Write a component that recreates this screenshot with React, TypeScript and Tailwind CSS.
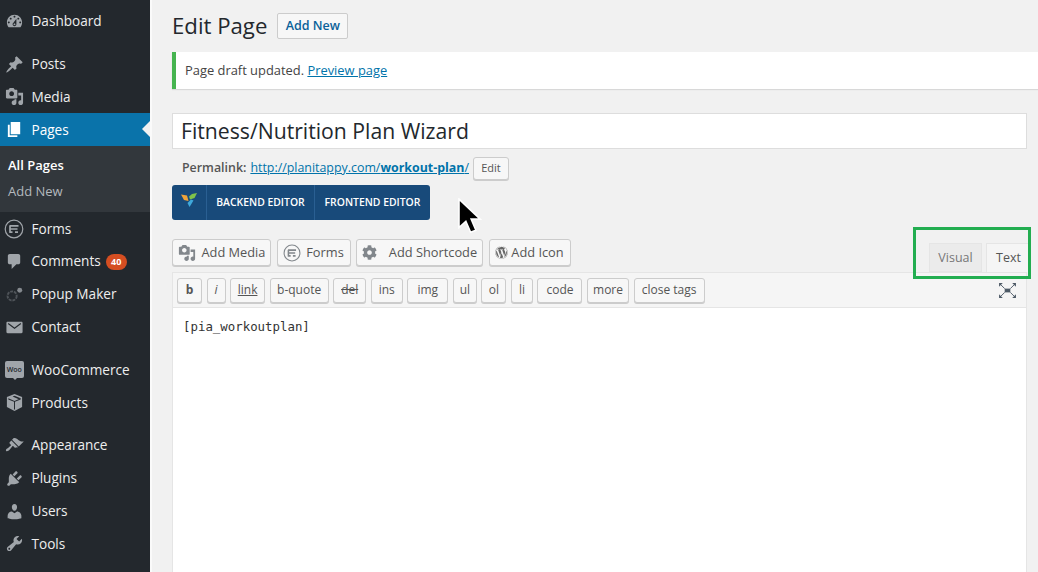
import React from "react";
import { FaWordpress, FaCog } from "react-icons/fa";

const iconPaths: Record<string, string> = {
  dashboard:
    "M3.76 16h12.48c1.1-1.37 1.76-3.11 1.76-5 0-4.42-3.58-8-8-8s-8 3.58-8 8c0 1.89.66 3.63 1.76 5zM10 4c.55 0 1 .45 1 1s-.45 1-1 1-1-.45-1-1 .45-1 1-1zM6 6c.55 0 1 .45 1 1s-.45 1-1 1-1-.45-1-1 .45-1 1-1zm8 0c.55 0 1 .45 1 1s-.45 1-1 1-1-.45-1-1 .45-1 1-1zm-5.37 5.55L12 7v6c0 1.1-.9 2-2 2s-2-.9-2-2c0-.57.24-1.08.63-1.45zM4 10c.55 0 1 .45 1 1s-.45 1-1 1-1-.45-1-1 .45-1 1-1zm12 0c.55 0 1 .45 1 1s-.45 1-1 1-1-.45-1-1 .45-1 1-1zm-5 3c0-.55-.45-1-1-1s-1 .45-1 1 .45 1 1 1 1-.45 1-1z",
  posts:
    "M10.44 3.02l1.82-1.82 6.36 6.35-1.83 1.82c-1.05-.68-2.48-.57-3.41.36l-.75.75c-.92.93-1.04 2.35-.35 3.41l-1.83 1.82-2.41-2.41-2.8 2.79c-.42.42-3.38 2.71-3.8 2.29s1.86-3.39 2.28-3.81l2.79-2.79L4.1 9.36l1.83-1.82c1.05.69 2.48.57 3.4-.36l.75-.75c.93-.92 1.05-2.35.36-3.41z",
  media:
    "M13 11V4c0-.55-.45-1-1-1h-1.67L9 1H5L3.67 3H2c-.55 0-1 .45-1 1v7c0 .55.45 1 1 1h10c.55 0 1-.45 1-1zM7 4.5c1.38 0 2.5 1.12 2.5 2.5S8.38 9.5 7 9.5 4.5 8.38 4.5 7 5.62 4.5 7 4.5zM14 6h5v10.5c0 1.38-1.12 2.5-2.5 2.5S14 17.88 14 16.5s1.12-2.5 2.5-2.5c.17 0 .34.02.5.05V9h-3V6zm-4 8.05V13h2v3.5c0 1.38-1.12 2.5-2.5 2.5S7 17.88 7 16.5 8.12 14 9.5 14c.17 0 .34.02.5.05z",
  pages: "M6 15V2h10v13H6zm-1 1h8v2H3V5h2v11z",
  comments:
    "M5 2h9c1.1 0 2 .9 2 2v7c0 1.1-.9 2-2 2h-2l-5 5v-5H5c-1.1 0-2-.9-2-2V4c0-1.1.9-2 2-2z",
  contact:
    "M1.500 5.200C1.500 4.500 2 4 2.700 4h14.600c.7 0 1.200.5 1.200 1.200v9.600c0 .7-.5 1.200-1.200 1.200H2.700c-.7 0-1.200-.5-1.200-1.200zM3 6.200l7 5.300 7-5.300-.7-.9-6.300 4.700-6.300-4.700z",
  products:
    "M10 1l8 3.200v10.600L10 19l-8-4.200V4.200zM10 2.800L8 3.700l6.500 2.800 2-.9zM3.500 5.600v1.200l6 2.500v8l1 0v-8l6-2.500V5.600L10 8.300z",
  appearance:
    "M14.48 11.06L7.41 3.99l1.5-1.5c.5-.56 2.3-.47 3.51.32 1.21.8 1.43 1.28 2.91 2.1 1.18.64 2.45 1.26 4.45.85zm-.71.71L6.7 4.7 4.93 6.47c-.39.39-.39 1.02 0 1.41l1.06 1.06c.39.39.39 1.03 0 1.42-.6.6-1.43 1.11-2.21 1.69-.35.26-.7.53-1.01.84C1.43 13.23.4 14.84 1.25 15.7c.86.85 2.47-.18 3.81-1.52.31-.31.58-.66.85-1.02.57-.78 1.08-1.61 1.69-2.21.39-.39 1.02-.39 1.41 0l1.06 1.06c.39.39 1.02.39 1.41 0z",
  plugins:
    "M13.11 4.36L9.87 7.6 8 5.73l3.24-3.24c.35-.34 1.05-.2 1.56.32.52.51.66 1.21.31 1.55zm-8 1.77l.91-1.12 9.01 9.01-1.19.84c-.71.71-2.63 1.16-3.82 1.16H6.14L4.9 17.26c-.59.59-1.54.59-2.12 0-.59-.58-.59-1.53 0-2.12l1.24-1.24v-3.88c0-1.13.4-3.19 1.09-3.89zm7.26 3.97l3.24-3.24c.34-.35 1.04-.21 1.55.31.52.51.66 1.21.31 1.55l-3.24 3.25z",
  users:
    "M10 9.25c-2.27 0-2.73-3.44-2.73-3.44C7 4.02 7.82 2 9.97 2c2.16 0 2.98 2.02 2.71 3.81 0 0-.41 3.44-2.68 3.44zm0 2.57L12.72 10c2.39 0 4.52 2.33 4.52 4.53v2.49s-3.65 1.13-7.24 1.13c-3.65 0-7.24-1.13-7.24-1.13v-2.49c0-2.25 1.94-4.48 4.47-4.48z",
  tools:
    "M16.68 9.77c-1.34 1.34-3.3 1.67-4.95.99l-5.41 6.52c-.99.99-2.59.99-3.58 0s-.99-2.59 0-3.57l6.52-5.42c-.68-1.65-.35-3.61.99-4.95 1.28-1.28 3.12-1.62 4.72-1.06l-2.89 2.89 2.82 2.82 2.86-2.87c.53 1.58.18 3.39-1.08 4.65zM3.81 16.21c.4.39 1.04.39 1.43 0 .4-.4.4-1.04 0-1.43-.39-.4-1.03-.4-1.43 0-.39.39-.39 1.03 0 1.43z",
};

const DashIcon = ({ name, className }: { name: string; className?: string }) => (
  <svg viewBox="0 0 20 20" fill="currentColor" fillRule="evenodd" className={className}>
    <path d={iconPaths[name]} />
  </svg>
);

const FormsIcon = ({ className }: { className?: string }) => (
  <svg viewBox="0 0 20 20" fill="none" stroke="currentColor" className={className}>
    <circle cx="10" cy="10" r="8.800" strokeWidth="1.200" />
    <path d="M5.500 6.800h9M5.500 10h8M5.500 13.200h3M6 6.800v7M11 13.200h3" strokeWidth="1.700" />
  </svg>
);

const PopupIcon = () => (
  <svg viewBox="0 0 20 20" fill="none" className="h-[19px] w-[19px] text-[#4f5459]">
    <circle cx="7.500" cy="11.500" r="4.800" stroke="currentColor" strokeWidth="2" strokeDasharray="3 1" />
    <circle cx="15.500" cy="5.500" r="2.600" fill="#84898e" />
  </svg>
);

const WooIcon = () => (
  <span className="relative flex h-[17px] w-[19px] items-center justify-center rounded-[2px] bg-[#a0a5aa] text-[7px] font-semibold leading-none text-[#23282d]">
    Woo
    <span className="absolute bottom-[-2px] left-[8px] h-0 w-0 border-x-[2px] border-t-[2px] border-x-transparent border-t-[#a0a5aa]" />
  </span>
);

type MenuItem = { label: string; icon: React.ReactNode; badge?: string; gap?: boolean };

const sideIcon = "h-[19px] w-[19px]";

const topMenu: MenuItem[] = [
  { label: "Dashboard", icon: <DashIcon name="dashboard" className={sideIcon} /> },
  { label: "Posts", icon: <DashIcon name="posts" className={sideIcon} />, gap: true },
  { label: "Media", icon: <DashIcon name="media" className={sideIcon} /> },
];

const lowerMenu: MenuItem[] = [
  { label: "Forms", icon: <FormsIcon className="h-[20px] w-[20px]" /> },
  { label: "Comments", icon: <DashIcon name="comments" className={sideIcon} />, badge: "40" },
  { label: "Popup Maker", icon: <PopupIcon /> },
  { label: "Contact", icon: <DashIcon name="contact" className={sideIcon} /> },
  { label: "WooCommerce", icon: <WooIcon />, gap: true },
  { label: "Products", icon: <DashIcon name="products" className={sideIcon} /> },
  { label: "Appearance", icon: <DashIcon name="appearance" className={sideIcon} />, gap: true },
  { label: "Plugins", icon: <DashIcon name="plugins" className={sideIcon} /> },
  { label: "Users", icon: <DashIcon name="users" className={sideIcon} /> },
  { label: "Tools", icon: <DashIcon name="tools" className={sideIcon} /> },
];

const SideRow = ({ item }: { item: MenuItem }) => (
  <div className={`flex h-[32.800px] items-center pt-[1px] text-[13.600px] text-[#eeeeee] ${item.gap ? "mt-[10px]" : ""}`}>
    <span className="flex w-[31.500px] shrink-0 justify-center pr-[3px] text-[#a0a5aa]">{item.icon}</span>
    <span>{item.label}</span>
    {item.badge && (
      <span className="ml-[5px] flex h-[16px] w-[21px] items-center justify-center rounded-full bg-[#d54e21] text-[9px] font-bold text-white">
        {item.badge}
      </span>
    )}
  </div>
);

const Sidebar = () => (
  <aside className="w-[150px] shrink-0 bg-[#23282d] pt-[4.500px]">
    {topMenu.map((item) => (
      <SideRow key={item.label} item={item} />
    ))}
    <div className="relative flex h-[33px] items-center pt-[1px] bg-[#0a73aa] text-[13.600px] text-white">
      <span className="flex w-[31.500px] shrink-0 justify-center pr-[3px]">
        <DashIcon name="pages" className={sideIcon} />
      </span>
      <span>Pages</span>
      <span className="absolute right-0 top-[8px] h-0 w-0 border-y-[8px] border-r-[8px] border-y-transparent border-r-[#f1f1f1]" />
    </div>
    <div className="h-[66px] bg-[#32373c] pt-[7px] text-[13px]">
      <div className="flex h-[26px] items-center pl-[8px] font-semibold text-white">All Pages</div>
      <div className="flex h-[26px] items-center pl-[8px] text-[#b4b9be]">Add New</div>
    </div>
    {lowerMenu.map((item) => (
      <SideRow key={item.label} item={item} />
    ))}
  </aside>
);

const btn = "flex items-center rounded-[3px] border border-[#cccccc] bg-[#f7f7f7] shadow-[0_1px_0_#cccccc]";

const mediaBtn = `${btn} h-[27px] justify-center text-[12.800px] text-[#555555]`;

const tagButtons = [
  { label: "b", w: "w-[25px]", extra: "font-bold" },
  { label: "i", w: "w-[19px]", extra: "italic" },
  { label: "link", w: "w-[35px]", extra: "underline" },
  { label: "b-quote", w: "w-[59px]", extra: "" },
  { label: "del", w: "w-[33px]", extra: "line-through" },
  { label: "ins", w: "w-[32px]", extra: "" },
  { label: "img", w: "w-[41px]", extra: "" },
  { label: "ul", w: "w-[24px]", extra: "" },
  { label: "ol", w: "w-[25px]", extra: "" },
  { label: "li", w: "w-[22px]", extra: "" },
  { label: "code", w: "w-[45px]", extra: "" },
  { label: "more", w: "w-[42px]", extra: "" },
  { label: "close tags", w: "w-[71px]", extra: "" },
];

const Editor = () => (
  <div className="relative mr-[11px] mt-[19px]">
    <div className="flex items-end justify-between">
      <div className="flex gap-[5.500px] pb-[6px]">
        <div className={`${mediaBtn} w-[99px] gap-[6px]`}>
          <DashIcon name="media" className="h-[18px] w-[18px] text-[#82878c]" />
          Add Media
        </div>
        <div className={`${mediaBtn} w-[74px] gap-[5px]`}>
          <FormsIcon className="h-[18px] w-[18px] text-[#82878c]" />
          Forms
        </div>
        <div className={`${mediaBtn} w-[127px] gap-[12px]`}>
          <FaCog className="h-[15px] w-[15px] text-[#82878c]" />
          Add Shortcode
        </div>
        <div className={`${mediaBtn} w-[82px] gap-[3px]`}>
          <FaWordpress className="h-[13px] w-[13px] text-[#666666]" />
          Add Icon
        </div>
      </div>
      <div className="flex translate-x-[4px] gap-[4px] text-[12.500px]">
        <div className="flex h-[29px] w-[53px] items-center justify-center border border-[#e5e5e5] bg-[#ebebeb] pt-[2px] text-[#777777]">Visual</div>
        <div className="flex h-[29px] w-[45px] items-center justify-center border border-b-0 border-[#e5e5e5] bg-[#f5f5f5] pt-[1px] text-[#555555]">Text</div>
      </div>
    </div>
    <div className="border border-[#e5e5e5] bg-white">
      <div className="flex h-[35px] items-center justify-between border-b border-[#e5e5e5] bg-[#f5f5f5] pl-[4px] pr-[10px]">
        <div className="flex gap-[4.550px]">
          {tagButtons.map((t) => (
            <div key={t.label} className={`${btn} ${t.w} h-[25px] justify-center text-[12px] text-[#555555] ${t.extra}`}>
              {t.label}
            </div>
          ))}
        </div>
        <svg viewBox="0 0 18 16" className="h-[15px] w-[17px] text-[#4d5a66]" fill="currentColor">
          <rect x="6" y="6" width="6" height="4" />
          <path d="M0 0h4L0 4zM18 0h-4l4 4zM0 16h4L0 12zM18 16h-4l4-4z" />
          <path d="M2 2l4 4M16 2l-4 4M2 14l4-4M16 14l-4-4" stroke="currentColor" strokeWidth="1" />
        </svg>
      </div>
      <div className="h-[270px] px-[10px] py-[10px] font-['DejaVu_Sans_Mono',monospace] text-[12.400px] leading-[18px] text-[#333333]">
        [pia_workoutplan]
      </div>
    </div>
    <div className="pointer-events-none absolute left-[741px] top-[-12px] h-[52px] w-[118px] border-[3px] border-[#22ad50]" />
  </div>
);

export default function App() {
  return (
    <div className="flex h-[572px] w-[1038px] overflow-hidden bg-[#f1f1f1] font-['Open_Sans',sans-serif]">
      <Sidebar />
      <main className="min-w-0 flex-1 border-l-2 border-[#fafafa] pl-[20px] pt-[13px]">
        <div className="flex items-center">
          <h1 className="text-[22.200px] leading-[26px] text-[#23282d]">Edit Page</h1>
          <div className="ml-[10px] flex h-[26px] w-[71px] items-center justify-center rounded-[2px] border border-[#cccccc] bg-[#f7f7f7] text-[12.500px] font-semibold text-[#0a6199]">
            Add New
          </div>
        </div>
        <div className="mt-[13px] flex h-[37px] items-center border-l-4 border-[#46b450] bg-white pl-[9px] text-[12.900px] text-[#444444] shadow-[0_1px_1px_rgba(0,0,0,0.1)]">
          Page draft updated.&nbsp;<span className="text-[#0073aa] underline">Preview page</span>
        </div>
        <div className="mr-[11px] mt-[24px] flex h-[36px] items-center border border-[#dddddd] bg-white pl-[8px] text-[21.200px] text-[#23282d]">
          Fitness/Nutrition Plan Wizard
        </div>
        <div className="mt-[8px] flex h-[23px] items-center pl-[10px] text-[12.400px] text-[#555555]">
          <span className="font-semibold">Permalink:</span>
          <span className="ml-[4px] text-[#0073aa] underline">
            http://planitappy.com/<span className="font-bold">workout-plan</span>/
          </span>
          <div className="ml-[4px] flex h-[23px] w-[36px] items-center justify-center rounded-[3px] border border-[#cccccc] bg-[#f7f7f7] text-[11px] text-[#555555] shadow-[0_1px_0_#cccccc]">
            Edit
          </div>
        </div>
        <div className="mt-[5px] flex h-[35px] w-[258px] items-center rounded-[3px] bg-[#184a7a] text-[10.400px] font-semibold text-white">
          <div className="flex h-full w-[35px] items-center justify-center border-r border-[#2a5f92]">
            <svg viewBox="0 0 16 14" className="mb-[5px] h-[14px] w-[16px]">
              <path d="M0 1.500l6 1 1.500 5.500-4.500-1z" fill="#f0a33a" />
              <path d="M8 3.500l3-2.500 5-1-2.500 5-4.500 1.500z" fill="#7ec24a" />
              <path d="M6.500 10l3.500-3.500 2.500 1-4 6.500z" fill="#3fa9dc" />
            </svg>
          </div>
          <div className="flex h-full w-[108px] items-center justify-center border-r border-[#2a5f92]">BACKEND EDITOR</div>
          <div className="flex h-full flex-1 items-center justify-center">FRONTEND EDITOR</div>
        </div>
        <Editor />
      </main>
      <svg viewBox="0 0 24 36" className="absolute left-[455px] top-[198px] h-[38px] w-[27px]">
        <path d="M3 1v27l6.500-6 4.500 10.500 5-2L14.500 20H23z" fill="#000000" stroke="#ffffff" strokeWidth="1.500" />
      </svg>
    </div>
  );
}
